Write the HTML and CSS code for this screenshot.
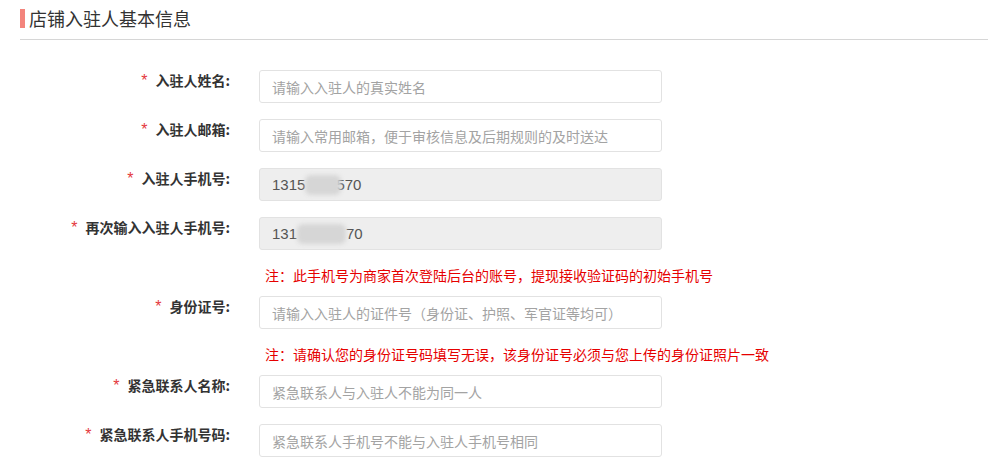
FILE: index.html
```html
<!DOCTYPE html>
<html lang="zh-CN">
<head>
<meta charset="utf-8">
<title>店铺入驻人基本信息</title>
<link rel="stylesheet" href="styles.css">
</head>
<body>
<div class="header">
  <span class="bar"></span>
  <h2 class="title">店铺入驻人基本信息</h2>
</div>
<form class="form">
  <div class="row">
    <label class="label"><span class="req">*</span>入驻人姓名:</label>
    <input class="field" type="text" placeholder="请输入入驻人的真实姓名">
  </div>
  <div class="row">
    <label class="label"><span class="req">*</span>入驻人邮箱:</label>
    <input class="field" type="text" placeholder="请输入常用邮箱，便于审核信息及后期规则的及时送达">
  </div>
  <div class="row">
    <label class="label"><span class="req">*</span>入驻人手机号:</label>
    <div class="field readonly">1315<span class="blur b1"></span><span class="tail">570</span></div>
  </div>
  <div class="row">
    <label class="label"><span class="req">*</span>再次输入入驻人手机号:</label>
    <div class="field readonly">131<span class="blur b2"></span>70</div>
  </div>
  <p class="note">注：此手机号为商家首次登陆后台的账号，提现接收验证码的初始手机号</p>
  <div class="row">
    <label class="label"><span class="req">*</span>身份证号:</label>
    <input class="field" type="text" placeholder="请输入入驻人的证件号（身份证、护照、军官证等均可）">
  </div>
  <p class="note">注：请确认您的身份证号码填写无误，该身份证号必须与您上传的身份证照片一致</p>
  <div class="row">
    <label class="label"><span class="req">*</span>紧急联系人名称:</label>
    <input class="field" type="text" placeholder="紧急联系人与入驻人不能为同一人">
  </div>
  <div class="row">
    <label class="label"><span class="req">*</span>紧急联系人手机号码:</label>
    <input class="field" type="text" placeholder="紧急联系人手机号不能与入驻人手机号相同">
  </div>
</form>
</body>
</html>
```
FILE: styles.css
```css
* { box-sizing: border-box; }
body {
  margin: 0;
  background: #fff;
  font-family: "Microsoft YaHei", "Noto Sans CJK SC", "Noto Sans", sans-serif;
  color: #333;
  overflow: hidden;
}
.header {
  margin: 0 18px 0 20px;
  height: 40px;
  padding-top: 9px;
  border-bottom: 1px solid #d6d6d6;
  display: flex;
  align-items: flex-start;
}
.bar {
  width: 5px;
  height: 19px;
  background: #f3847c;
  flex: none;
}
.title {
  margin: 0 0 0 4px;
  font-size: 18px;
  font-weight: normal;
  line-height: 19px;
  color: #333;
}
.form {
  margin: 0;
  padding-top: 30px;
  display: flex;
  flex-direction: column;
}
.row {
  display: flex;
  align-items: flex-start;
  margin-bottom: 16px;
}
.label {
  width: 230px;
  flex: none;
  margin-right: 29px;
  text-align: right;
  font-size: 14px;
  font-weight: bold;
  line-height: 18px;
  padding-top: 1px;
  color: #333;
  white-space: nowrap;
}
.req {
  display: inline-block;
  font-family: "Liberation Sans", Arial, sans-serif;
  font-size: 16px;
  line-height: 18px;
  vertical-align: top;
  margin-top: 1px;
  margin-right: 8px;
  color: #e4393c;
  font-weight: normal;
}
.field {
  width: 403px;
  height: 33px;
  border: 1px solid #e2e2e2;
  border-radius: 3px;
  padding: 0 12px;
  font-family: inherit;
  font-size: 14px;
  color: #555;
  background: #fff;
  outline: none;
}
.field::placeholder {
  color: #a3a3a3;
}
.readonly {
  background: #eeeeee;
  display: flex;
  align-items: center;
  padding-left: 12px;
  font-family: "Liberation Sans", Arial, sans-serif;
  font-size: 15px;
}
.blur {
  display: inline-block;
  height: 20px;
  background: #d6d6d6;
  border-radius: 6px;
  filter: blur(2px);
}
.b1 { width: 36px; margin-right: -5px; position: relative; z-index: 1; }
.b2 { width: 49px; }
.tail { position: relative; }
.note {
  margin: -2px 0 10px 265px;
  font-size: 14px;
  line-height: 22px;
  color: #e60000;
}
```
